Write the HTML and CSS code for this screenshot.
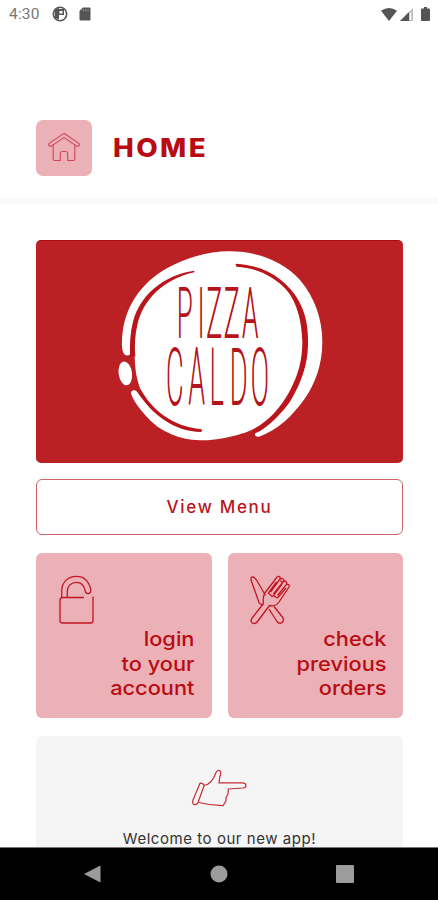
FILE: index.html
```html
<!DOCTYPE html>
<html lang="en">
<head>
    <meta charset="UTF-8">
    <meta name="viewport" content="width=device-width, initial-scale=1.0">
    <title>Pizza Caldo - Home</title>
    <link rel="stylesheet" href="styles.css">
</head>
<body>
    <!-- Status bar -->
    <div class="status-bar">
        <span class="time">4:30</span>
        <svg class="status-app" width="16" height="16" viewBox="0 0 16 16">
            <circle cx="8" cy="8" r="6.7" fill="none" stroke="#555" stroke-width="1.6"/>
            <path d="M2.5 3.5 L7 2 V13.5 L3 12 Z M7 3 H12 V9 H7 Z" fill="#555"/>
            <path d="M7.5 5 H10.5 V7.5 H7.5 Z M7.5 9.5 H9 V13 H7.5 Z" fill="#fff"/>
        </svg>
        <svg class="status-sd" width="12" height="14" viewBox="0 0 12 14">
            <path d="M4 0.5 H10.5 Q11.5 0.5 11.5 1.5 V12.5 Q11.5 13.5 10.5 13.5 H1.5 Q0.5 13.5 0.5 12.5 V4 Z" fill="#555"/>
            <path d="M4.5 2.2 V4.4 M6.8 2.2 V4.4 M9 2.2 V4.4" stroke="#999" stroke-width="0.9"/>
        </svg>
        <div class="status-right">
            <svg width="16" height="13" viewBox="0 0 16 13">
                <path d="M0 2.8 Q8 -2.8 16 2.8 L8 13 Z" fill="#555"/>
            </svg>
            <svg width="13" height="13" viewBox="0 0 13 13">
                <path d="M0 13 L13 0 V13 Z" fill="#bbb"/>
                <path d="M0 13 L9 4 V13 Z" fill="#555"/>
                <path d="M10.5 4.5 V12" stroke="#fff" stroke-width="1.6"/>
            </svg>
            <svg width="9" height="14" viewBox="0 0 9 14">
                <path d="M3 0 H6 V1.5 H8 Q9 1.5 9 2.5 V13 Q9 14 8 14 H1 Q0 14 0 13 V2.5 Q0 1.5 1 1.5 H3 Z" fill="#555"/>
            </svg>
        </div>
    </div>

    <header class="header">
        <div class="home-icon">
            <svg width="34" height="30" viewBox="0 0 34 30">
                <path d="M17 1.3 L32 11.5 Q33.2 14.5 30.2 14.5 L17 5.6 L3.8 14.5 Q0.8 14.5 2 11.5 Z"/>
                <path d="M6.2 13 V27 Q6.2 28.5 7.8 28.5 H13.3 V21.5 Q13.3 19.5 15.3 19.5 H18.7 Q20.7 19.5 20.7 21.5 V28.5 H26.2 Q27.8 28.5 27.8 27 V13"/>
            </svg>
        </div>
        <h1>HOME</h1>
    </header>

    <main class="content">
        <div class="banner">
            <svg width="230" height="215" viewBox="0 0 690 645">
                <!-- plate -->
                <path class="plate" d="M58 343 C48 330 50 300 53 275 C65 190 115 118 205 75 C260 48 320 33 375 34 C460 34 535 65 585 120 C630 172 652 240 652 305 C652 375 630 430 600 475 C560 530 520 570 462 590 C450 592 446 582 454 574 L438 571 C425 577 415 580 400 584 C350 598 315 601 285 601 C220 598 165 575 125 530 C100 503 84 480 78 460 C78 450 90 448 97 456 L108 452 C95 420 90 390 89 350 L76 343 Q66 350 58 343 Z"/>
                <ellipse class="plate" cx="61" cy="400" rx="20" ry="36" transform="rotate(-8 61 400)"/>
                <!-- rim lines -->
                <path class="rim" d="M268 92 C175 105 105 165 84 245 C76 275 74 310 75 347 L91 350 C88 315 90 285 97 255 C115 175 180 116 268 97 Z"/>
                <path class="rim" d="M394 71 C480 76 545 120 580 180 C603 222 610 260 609 315 C608 375 588 430 555 485 C525 525 490 562 451 580 L438 571 C490 545 525 505 553 455 C580 405 592 360 592 305 C590 245 578 190 544 149 C505 108 455 84 395 80 Q389 75 394 71 Z"/>
                <path class="rim" d="M107 448 C140 508 200 560 290 568 Q293 573 288 576 C210 574 145 530 95 453 Z"/>
                <g class="logo-text">
                    <text transform="translate(216 291) scale(0.38 1)" x="0 163 232 371 518" y="0" font-size="204">PIZZA</text>
                    <text transform="translate(184 492) scale(0.34 1)" x="0 197 384 562 747" y="0" font-size="234">CALDO</text>
                </g>
            </svg>
        </div>

        <button class="menu-button">View Menu</button>

        <div class="cards">
            <div class="card">
                <svg width="52" height="52" viewBox="-1.5 0.5 52 52">
                    <path d="M26.5 23 H5 Q2.5 23 2.5 25.5 V46 Q2.5 48.5 5 48.5 H33 Q35.5 48.5 35.5 46 V22"/>
                    <path d="M4.2 23 V17 C4.2 7 11 1.8 19 1.8 C26 1.8 31 6 33.2 14.5 Q33.8 18.5 31 19 Q28.3 19.3 27.7 16.5 C26.5 10.5 23.5 7.8 19 7.8 C13.5 7.8 9.8 11.5 9.8 17 V23"/>
                </svg>
                <p>login<br>to your<br>account</p>
            </div>
            <div class="card">
                <svg width="52" height="52" viewBox="0 0 52 52">
                    <!-- knife -->
                    <path d="M15 30.5 L11.2 28 L3 5 Q2.5 1.5 5 2 Q7 2.5 8.5 5 L17.5 20.5"/>
                    <path d="M21 34 L29 46.5 Q31.5 49.5 34 47.5 Q36.5 45.5 34.8 42.5 L26 31.5"/>
                    <!-- fork -->
                    <path d="M29.5 1.5 L16.8 18 Q14.5 22 15.5 28.5 L3.8 43.5 Q2 46.5 4.6 48.2 Q7.3 49.5 9.5 46.5 L21.5 30.5 Q27.5 32 31 27 L41 12 Q41.8 8.8 38.5 9.4 L29.5 20.5"/>
                    <path d="M29.5 1.5 Q33 .8 32 4 L22.5 17 M32 4 Q36 2.5 35.8 6 L25.5 19 M35.8 6 Q39.5 6 38.5 9.4 M28.5 7 L20.5 18 M34 9 L25.5 20.5 Q24 22.5 22.5 20 M38 13 L29.5 23 M32.5 5.5 L34 7 M20 18 L23 20 M26 21 L29 23"/>
                </svg>
                <p>check<br>previous<br>orders</p>
            </div>
        </div>

        <div class="welcome">
            <svg width="56" height="38" viewBox="1 0 56 38">
                <path d="M9 14.2 L2 31 Q.8 35 3.3 35.6 Q6 36 7 33.5 L13 17 Q13.3 14.5 9 14.2 Z"/>
                <path d="M12.8 16.5 C19 16 22.5 10.5 25 3.5 Q27 .2 29.2 2.2 Q30.5 3.5 28.8 8 L28 13.8 H52 Q55 14.3 55 16.5 Q55 18.5 52 19 L37.5 20 Q37 22 37 25 L35 28.5 V32 L32 36.6 Q20 36.5 7.5 33.5"/>
            </svg>
            <p>Welcome to our new app!</p>
        </div>
    </main>

    <!-- Android navigation -->
    <nav class="nav-bar">
        <svg width="18" height="20" viewBox="0 0 18 20"><path d="M17.5 1.5 V18.5 L1 10 Z"/></svg>
        <svg width="18" height="18" viewBox="0 0 18 18"><circle cx="9" cy="9" r="8.5"/></svg>
        <svg width="18" height="18" viewBox="0 0 18 18"><rect width="18" height="18" rx="1"/></svg>
    </nav>
</body>
</html>
```

FILE: styles.css
```css
* {
    box-sizing: border-box;
}
body {
    margin: 0;
    height: 900px;
    display: flex;
    flex-direction: column;
    overflow: hidden;
    background-color: #fff;
    color: #b90b12;
    font-family: Inter, "Open Sans", sans-serif;
}
h1, p {
    margin: 0;
}
svg {
    display: block;
    flex: none;
}
.status-bar {
    height: 28px;
    padding: 0 8px 0 9px;
    display: flex;
    align-items: center;
}
.time {
    width: 43px;
    color: #777;
    font-family: Roboto, sans-serif;
    font-size: 15.5px;
    letter-spacing: 0.2px;
}
.status-sd {
    margin-left: 11px;
}
.status-right {
    margin-left: auto;
    display: flex;
    align-items: center;
}
.status-right svg + svg {
    margin-left: 3px;
}
.status-right svg:last-child {
    margin-left: 8px;
}
.header {
    height: 176px;
    padding: 92px 36px 0;
    display: flex;
    align-items: flex-start;
    border-bottom: 6px solid #f9f9f9;
}
.home-icon {
    width: 56px;
    height: 56px;
    display: flex;
    justify-content: center;
    align-items: center;
    background-color: #ebb1b7;
    border-radius: 7px;
}
.home-icon svg {
    fill: none;
    stroke: #cc4858;
    stroke-width: 1.1;
    margin-bottom: 3px;
}
.header h1 {
    margin-left: 21px;
    font-size: 25.5px;
    line-height: 56px;
    font-weight: 800;
    letter-spacing: 2.2px;
    transform: scaleX(1.09);
    transform-origin: left;
}
.content {
    flex: 1;
    min-height: 0;
    padding: 36px 35px 0 36px;
    overflow: hidden;
}
.banner {
    height: 223px;
    display: flex;
    justify-content: center;
    background-color: #bb2025;
    border-top: 1px solid #ad0c12;
    border-radius: 5px;
}
.banner svg {
    margin-top: -1px;
}
.plate {
    fill: #fff;
}
.rim {
    fill: #b9151b;
}
.logo-text {
    fill: #b5141a;
    stroke: #b5141a;
    font-family: Roboto, sans-serif;
    font-weight: 100;
}
.logo-text text {
    stroke-width: 1.5px;
    vector-effect: non-scaling-stroke;
}
.menu-button {
    display: block;
    width: 100%;
    height: 56px;
    margin: 16px 0 18px;
    padding: 0;
    background-color: #fff;
    border: 1px solid #cf6569;
    border-radius: 6px;
    color: #b9151b;
    font-family: inherit;
    font-size: 17px;
    font-weight: 500;
    letter-spacing: 1.7px;
}
.cards {
    display: flex;
    gap: 16px;
}
.card {
    flex: 1;
    height: 165px;
    padding: 22px 17px 0 20px;
    background-color: #ebb1b7;
    border-radius: 6px;
}
.card svg {
    fill: none;
    stroke: #c31521;
    stroke-width: 1.3;
    stroke-linejoin: round;
}
.card p {
    font-size: 20px;
    line-height: 24.5px;
    font-weight: 500;
    text-align: right;
    transform: scaleX(1.09);
    transform-origin: right;
}
.welcome {
    height: 160px;
    margin-top: 18px;
    padding-top: 33px;
    display: flex;
    flex-direction: column;
    align-items: center;
    background-color: #f5f5f5;
    border-radius: 6px;
}
.welcome svg {
    fill: none;
    stroke: #c92a34;
    stroke-width: 1.2;
    stroke-linejoin: round;
}
.welcome p {
    margin-top: 22px;
    color: #333;
    font-size: 15px;
    line-height: 20px;
    letter-spacing: 0.55px;
}
.nav-bar {
    height: 53px;
    padding: 0 84px 0 83px;
    display: flex;
    justify-content: space-between;
    align-items: center;
    background-color: #000;
    border-top: 1px solid #777;
}
.nav-bar svg {
    fill: #9c9c9c;
}
```
